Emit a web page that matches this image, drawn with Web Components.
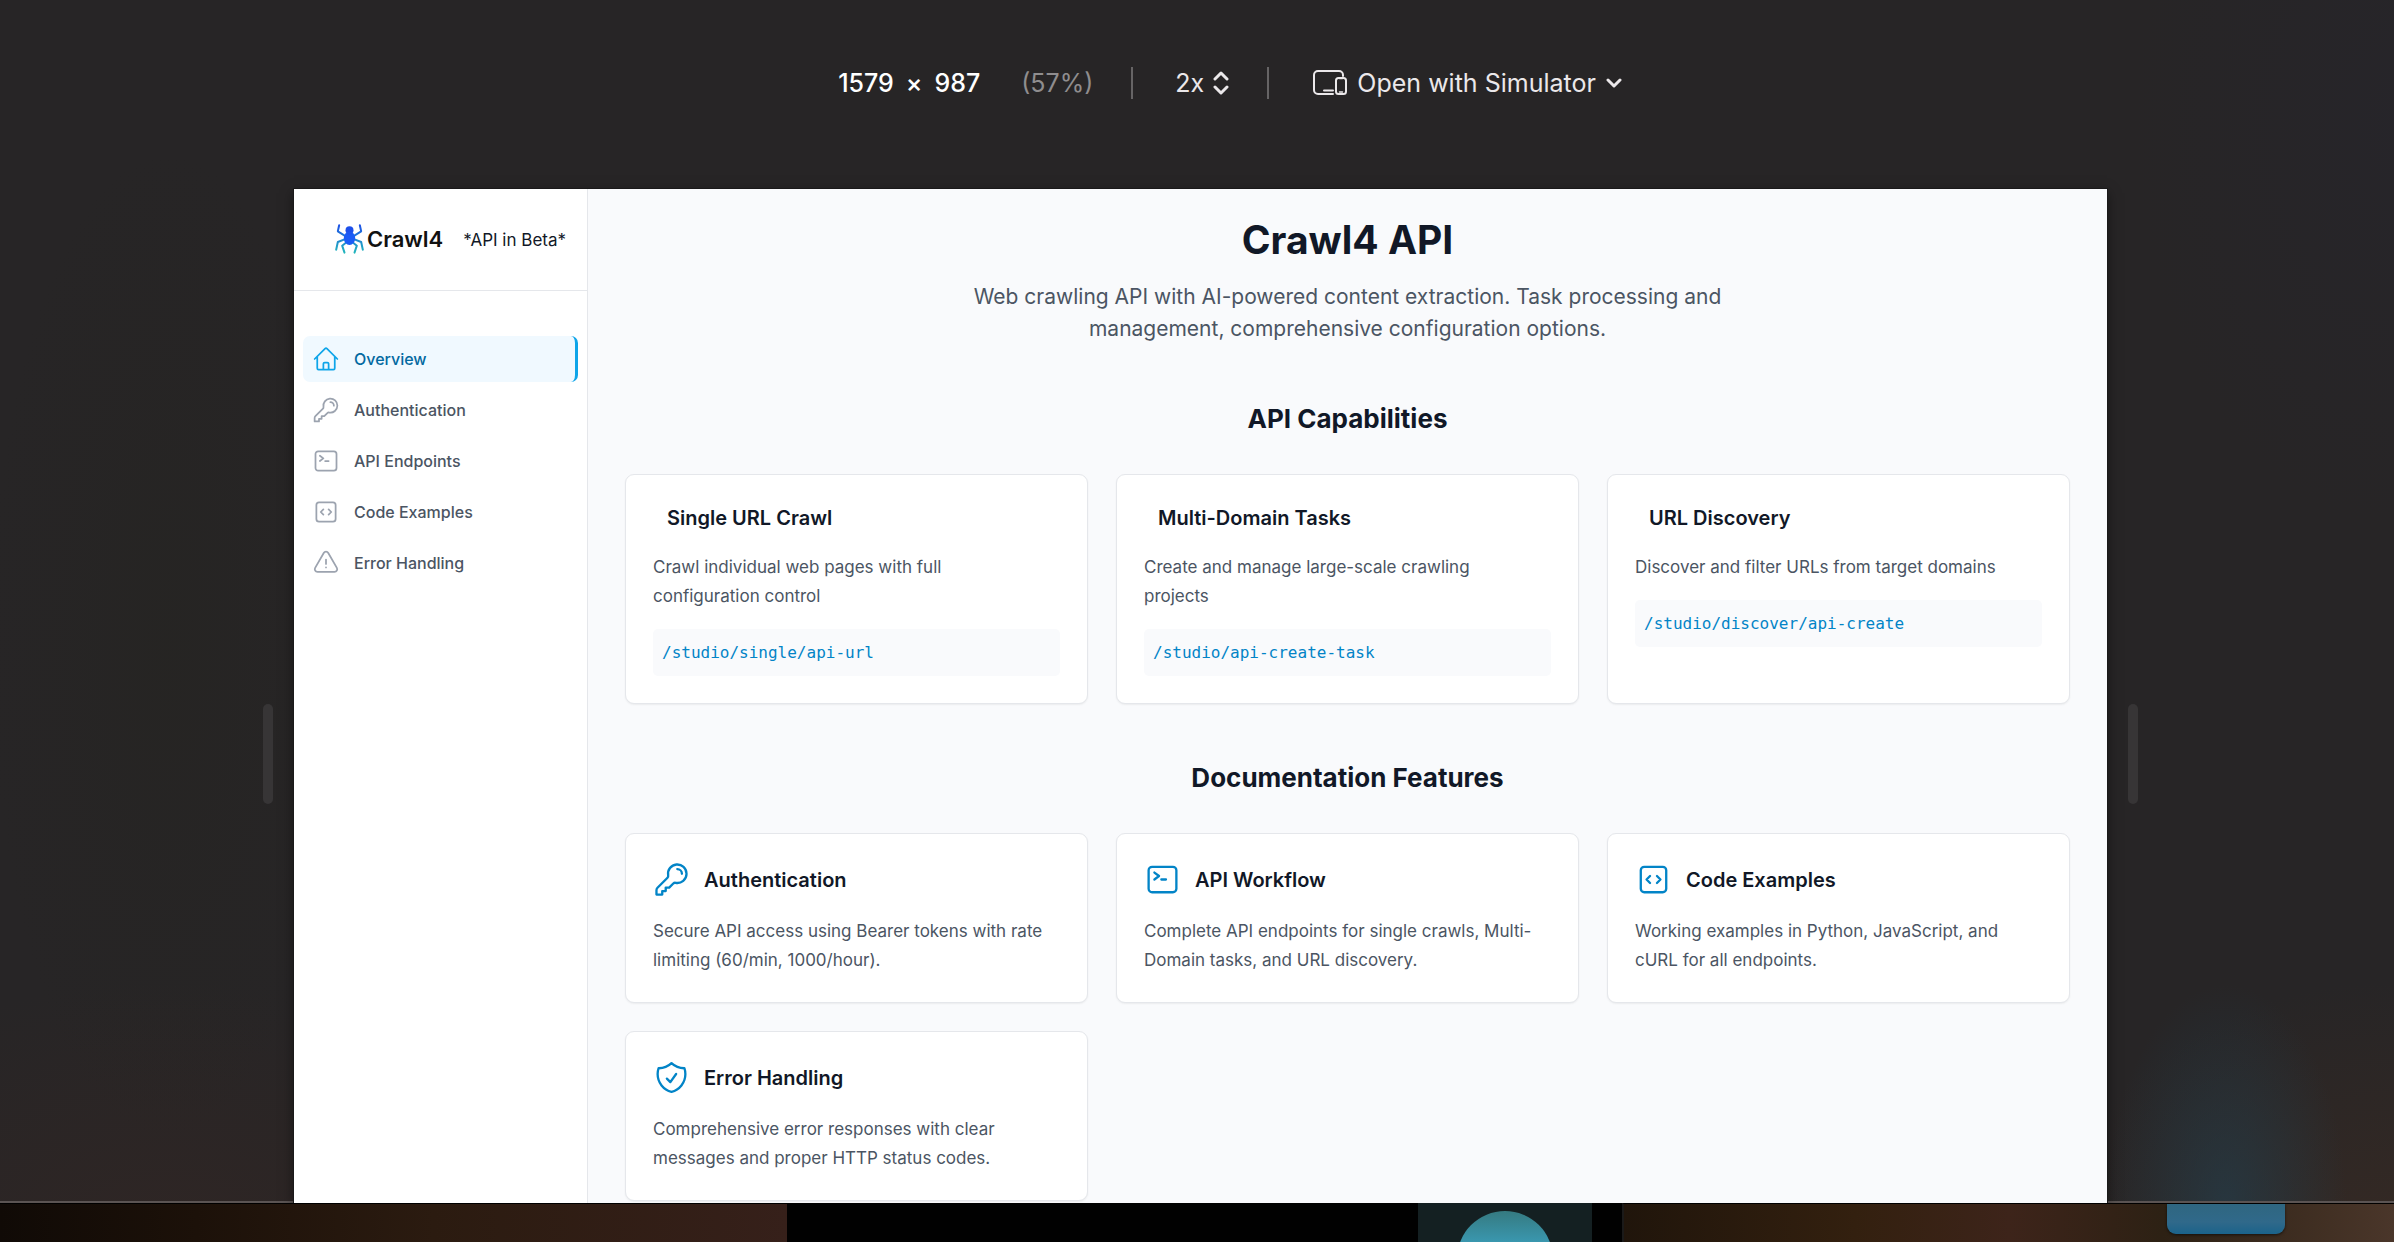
<!DOCTYPE html>
<html lang="en">
<head>
<meta charset="utf-8">
<meta name="viewport" content="width=device-width, initial-scale=1">
<title>Crawl4 API</title>
<style>
  html, body {
    margin: 0;
    background: #272526;
  }

  body {
    font-family: Inter, "Liberation Sans", sans-serif;
    color: #111827;
  }
</style>
</head>
<body>
<design-mode>
  <mode-toolbar slot="toolbar"></mode-toolbar>
  <docs-layout>
    <docs-sidebar slot="sidebar">
      <nav-item icon="home" active>Overview</nav-item>
      <nav-item icon="key">Authentication</nav-item>
      <nav-item icon="terminal">API Endpoints</nav-item>
      <nav-item icon="code">Code Examples</nav-item>
      <nav-item icon="warning">Error Handling</nav-item>
    </docs-sidebar>
    <docs-hero heading="Crawl4 API">Web crawling API with AI-powered content extraction. Task processing and management, comprehensive configuration options.</docs-hero>
    <docs-section heading="API Capabilities">
      <docs-card heading="Single URL Crawl" path="/studio/single/api-url">Crawl individual web pages with full configuration control</docs-card>
      <docs-card heading="Multi-Domain Tasks" path="/studio/api-create-task">Create and manage large-scale crawling projects</docs-card>
      <docs-card heading="URL Discovery" path="/studio/discover/api-create">Discover and filter URLs from target domains</docs-card>
    </docs-section>
    <docs-section heading="Documentation Features">
      <docs-card heading="Authentication" icon="key">Secure API access using Bearer tokens with rate limiting (60/min, 1000/hour).</docs-card>
      <docs-card heading="API Workflow" icon="terminal">Complete API endpoints for single crawls, Multi-Domain tasks, and URL discovery.</docs-card>
      <docs-card heading="Code Examples" icon="code">Working examples in Python, JavaScript, and cURL for all endpoints.</docs-card>
      <docs-card heading="Error Handling" icon="shield">Comprehensive error responses with clear messages and proper HTTP status codes.</docs-card>
    </docs-section>
  </docs-layout>
  <desktop-strip slot="desktop"></desktop-strip>
</design-mode>

<script>
const ICONS = {
  home: "M2.25 12l8.954-8.955c.44-.439 1.152-.439 1.591 0L21.75 12M4.5 9.75v10.125c0 .621.504 1.125 1.125 1.125H9.75v-4.875c0-.621.504-1.125 1.125-1.125h2.25c.621 0 1.125.504 1.125 1.125V21h4.125c.621 0 1.125-.504 1.125-1.125V9.75M8.25 21h8.25",
  key: "M15.75 5.25a3 3 0 013 3m3 0a6 6 0 01-7.029 5.912c-.563-.097-1.159.026-1.563.43L10.5 17.25H8.25v2.25H6v2.25H2.25v-2.818c0-.597.237-1.17.659-1.591l6.499-6.499c.404-.404.527-1 .43-1.563A6 6 0 1121.75 8.25z",
  terminal: "M6.75 7.5l3 2.25-3 2.25m4.5 0h3m-9 8.25h13.5A2.25 2.25 0 0021 18V6a2.25 2.25 0 00-2.25-2.25H5.25A2.25 2.25 0 003 6v12a2.25 2.25 0 002.25 2.25z",
  code: "M14.25 9.75L16.5 12l-2.25 2.25m-4.5 0L7.5 12l2.25-2.25M6 20.25h12A2.25 2.25 0 0020.25 18V6A2.25 2.25 0 0018 3.75H6A2.25 2.25 0 003.75 6v12A2.25 2.25 0 006 20.25z",
  warning: "M12 9v3.75m-9.303 3.376c-.866 1.5.217 3.374 1.948 3.374h14.71c1.73 0 2.813-1.874 1.948-3.374L13.949 3.378c-.866-1.5-3.032-1.5-3.898 0L2.697 16.126zM12 15.75h.007v.008H12v-.008z",
  shield: "M9 12.75L11.25 15 15 9.75m-3-7.036A11.959 11.959 0 013.598 6 11.99 11.99 0 003 9.749c0 5.592 3.824 10.29 9 11.623 5.176-1.332 9-6.03 9-11.622 0-1.31-.21-2.571-.598-3.751h-.152c-3.196 0-6.1-1.248-8.25-3.285z"
};

function icon(name) {
  return `<svg viewBox="0 0 24 24" fill="none" stroke="currentColor" stroke-width="1.5" stroke-linecap="round" stroke-linejoin="round" aria-hidden="true"><path d="${ICONS[name]}"/></svg>`;
}

class BaseElement extends HTMLElement {
  constructor() {
    super();
    this.attachShadow({ mode: "open" });
  }
  connectedCallback() {
    this.shadowRoot.innerHTML = this.template();
  }
}

/* Whole screen: toolbar, resizable page preview, strip of desktop below */
class DesignMode extends BaseElement {
  template() {
    return `
      <style>
        :host {
          display: grid;
          grid-template-rows: auto 1fr auto;
          min-height: 100vh;
          background:
            radial-gradient(ellipse 120px 220px at 93% 97%, rgba(35, 64, 80, 0.6), transparent),
            radial-gradient(ellipse 340px 260px at 100% 100%, rgba(62, 44, 34, 0.6), transparent),
            radial-gradient(ellipse 420px 260px at 7% 100%, rgba(52, 38, 35, 0.6), transparent),
            radial-gradient(ellipse 180px 500px at 7% 52%, rgba(37, 36, 33, 0.6), transparent),
            radial-gradient(ellipse 260px 400px at 100% 10%, rgba(38, 37, 44, 0.6), transparent),
            #272526;
        }

        .stage {
          display: flex;
          align-items: stretch;
          gap: 21px;
          padding: 0 256px 0 263px;
          border-bottom: 2px solid #5b5453;
        }

        .handle {
          align-self: center;
          flex: none;
          width: 10px;
          height: 100px;
          margin-top: 118px;
          border-radius: 5px;
          background: #373536;
        }

        .page {
          flex: 1;
          min-width: 0;
          display: grid;
          margin-bottom: -2px;
          background: #f9fafc;
          box-shadow: 0 0 0 1px #1a191a, 0 4px 12px rgba(0, 0, 0, 0.5);
        }
      </style>
      <slot name="toolbar"></slot>
      <div class="stage">
        <div class="handle"></div>
        <div class="page"><slot></slot></div>
        <div class="handle"></div>
      </div>
      <slot name="desktop"></slot>
    `;
  }
}

class ModeToolbar extends BaseElement {
  template() {
    return `
      <style>
        :host {
          display: flex;
          align-items: center;
          justify-content: center;
          height: 165px;
          padding: 0 0 24px 66px;
          font-size: 25px;
          line-height: 32px;
          color: #ebe8ea;
          white-space: nowrap;
        }

        .size {
          display: flex;
          gap: 12px;
          font-weight: 500;
          color: #fff;
        }

        .scale {
          margin-left: 41px;
          color: #8f8d8e;
        }

        hr {
          width: 2px;
          height: 32px;
          margin: 0 42px 0 38px;
          border: 0;
          background: #666465;
        }

        .ratio {
          display: flex;
          align-items: center;
          gap: 6px;
        }

        select, button {
          appearance: none;
          margin: 0;
          padding: 0;
          border: 0;
          background: none;
          font: inherit;
          color: inherit;
        }

        select {
          width: 32px;
        }

        button {
          display: flex;
          align-items: center;
          gap: 10px;
          padding-left: 2px;
        }

        svg {
          flex: none;
          fill: none;
          stroke: currentColor;
          stroke-linecap: round;
          stroke-linejoin: round;
        }
      </style>
      <div class="size"><span>1579</span><span>×</span><span>987</span></div>
      <span class="scale">(57%)</span>
      <hr>
      <label class="ratio">
        <select aria-label="Pixel ratio"><option>1x</option><option selected>2x</option><option>3x</option></select>
        <svg width="16" height="24" viewBox="0 0 16 24" stroke-width="3"><path d="M2 8l6-6 6 6M2 16l6 6 6-6"/></svg>
      </label>
      <hr>
      <button type="button">
        <svg width="34" height="26" viewBox="0 0 34 26" stroke-width="2"><path d="M20 24H5a4 4 0 01-4-4V5a4 4 0 014-4h21a4 4 0 014 4v1M11 20.500h9"/><rect x="23" y="8" width="10" height="16" rx="2.500"/><path d="M26.500 8.500h3M26.500 22h3" stroke-width="1.500"/></svg>
        <span>Open with Simulator</span>
        <svg width="16" height="12" viewBox="0 0 16 12" stroke-width="3"><path d="M2 3l6 6 6-6"/></svg>
      </button>
    `;
  }
}

class DocsLayout extends BaseElement {
  template() {
    return `
      <style>
        :host {
          display: grid;
          grid-template-columns: 294px minmax(0, 1fr);
        }

        main {
          display: flex;
          flex-direction: column;
          gap: 55px;
          padding: 28px 37px 2px;
        }
      </style>
      <slot name="sidebar"></slot>
      <main><slot></slot></main>
    `;
  }
}

class DocsSidebar extends BaseElement {
  template() {
    return `
      <style>
        :host {
          display: block;
          background: #fff;
          border-right: 1px solid #e5e7eb;
        }

        header {
          display: flex;
          align-items: center;
          gap: 20px;
          height: 101px;
          padding-left: 41px;
          border-bottom: 1px solid #e5e7eb;
          font-size: 17px;
          white-space: nowrap;
        }

        .logo {
          display: flex;
          align-items: center;
          gap: 3px;
          padding-bottom: 2px;
          font-size: 22px;
          font-weight: 600;
          color: #111;
          text-decoration: none;
        }

        .logo svg {
          width: 29px;
          height: 30px;
        }

        nav {
          display: flex;
          flex-direction: column;
          gap: 5px;
          padding: 45px 9px;
        }
      </style>
      <header>
        <a class="logo" href="#">
          <svg viewBox="0 0 86 90" aria-hidden="true">
            <defs>
              <linearGradient id="legs" gradientUnits="userSpaceOnUse" x1="0" y1="0" x2="0" y2="88">
                <stop offset="0" stop-color="#1d4ee8"/>
                <stop offset="1" stop-color="#22b8bb"/>
              </linearGradient>
            </defs>
            <g fill="none" stroke="url(#legs)" stroke-width="6" stroke-linecap="round" stroke-linejoin="round">
              <path d="M12 4L8 22L32 37M74 4L78 22L54 37"/>
              <path d="M34 44L8 54L3 77M52 44L78 54L83 77"/>
              <path d="M35 54L21 65L28 86M51 54L65 65L58 86"/>
            </g>
            <circle cx="43" cy="19" r="12" fill="#1d50ea"/>
            <ellipse cx="43" cy="43" rx="17" ry="20" fill="#1b5cf6"/>
            <path d="M36 24h14v8H36z" fill="#1c56f0"/>
          </svg>
          <span>Crawl4</span>
        </a>
        <span>*API in Beta*</span>
      </header>
      <nav><slot></slot></nav>
    `;
  }
}

class NavItem extends BaseElement {
  template() {
    return `
      <style>
        :host {
          display: block;
          color: #4b5563;
        }

        a {
          display: flex;
          align-items: center;
          gap: 14px;
          box-sizing: border-box;
          height: 46px;
          padding: 0 9px;
          border-radius: 7px;
          font-size: 16px;
          font-weight: 500;
          color: inherit;
          text-decoration: none;
        }

        svg {
          width: 28px;
          height: 28px;
          color: #9ca3af;
        }

        :host([active]) a {
          background: #f0f9ff;
          border-right: 3px solid #0ea5e9;
          color: #0369a1;
        }

        :host([active]) svg {
          color: #0ea5e9;
        }
      </style>
      <a href="#">${icon(this.getAttribute("icon"))}<span><slot></slot></span></a>
    `;
  }
}

class DocsHero extends BaseElement {
  template() {
    return `
      <style>
        :host {
          display: block;
          text-align: center;
        }

        h1 {
          margin: 0 0 18px;
          font-size: 39px;
          line-height: 46px;
          font-weight: 700;
        }

        p {
          max-width: 771px;
          margin: 0 auto;
          font-size: 21px;
          line-height: 32px;
          color: #4b5563;
        }
      </style>
      <h1>${this.getAttribute("heading")}</h1>
      <p><slot></slot></p>
    `;
  }
}

class DocsSection extends BaseElement {
  template() {
    return `
      <style>
        :host {
          display: block;
        }

        h2 {
          margin: 0 0 37px;
          font-size: 26px;
          line-height: 37px;
          font-weight: 700;
          text-align: center;
        }

        .grid {
          display: grid;
          grid-template-columns: repeat(3, minmax(0, 1fr));
          gap: 28px;
        }
      </style>
      <h2>${this.getAttribute("heading")}</h2>
      <div class="grid"><slot></slot></div>
    `;
  }
}

class DocsCard extends BaseElement {
  template() {
    const name = this.getAttribute("icon");
    const path = this.getAttribute("path");
    return `
      <style>
        :host {
          display: block;
          padding: 27px;
          background: #fff;
          border: 1px solid #e5e7eb;
          border-radius: 9px;
          box-shadow: 0 1px 2px rgba(0, 0, 0, 0.06);
        }

        .head {
          display: flex;
          align-items: center;
          gap: 14px;
          margin-bottom: 19px;
        }

        h3 {
          margin: 0;
          font-size: 20px;
          line-height: 32px;
          font-weight: 600;
        }

        .plain {
          padding-left: 14px;
        }

        svg {
          width: 37px;
          height: 37px;
          color: #0284c7;
        }

        p {
          margin: 0;
          padding-right: 12px;
          font-size: 17px;
          line-height: 29px;
          color: #4b5563;
        }

        code {
          display: block;
          margin-top: 18px;
          padding: 9px;
          border-radius: 5px;
          background: #f9fafc;
          font: 16px/29px "DejaVu Sans Mono", monospace;
          color: #0284c7;
        }
      </style>
      <div class="head ${name ? "" : "plain"}">${name ? icon(name) : ""}<h3>${this.getAttribute("heading")}</h3></div>
      <p><slot></slot></p>
      ${path ? `<code>${path}</code>` : ""}
    `;
  }
}

/* Windows of the desktop that show under the preview */
class DesktopStrip extends BaseElement {
  template() {
    return `
      <style>
        :host {
          display: grid;
          grid-template-columns: 787fr 835fr 772fr;
          height: 39px;
          overflow: hidden;
          background: #000;
          z-index: 1;
        }

        .left {
          border-top: 1px solid #000;
          background:
            radial-gradient(ellipse 30px 30px at 54% 70%, rgba(74, 54, 94, 0.7), transparent),
            linear-gradient(90deg, #100a06, #1c1109 25%, #2b1b10 55%, #36201a);
        }

        .middle {
          display: flex;
          justify-content: flex-end;
          padding-right: 30px;
          background: #010101;
        }

        .tile {
          display: flex;
          justify-content: center;
          width: 174px;
          background: #142022;
          overflow: hidden;
        }

        .disc {
          flex: none;
          width: 96px;
          height: 96px;
          margin-top: 8px;
          border-radius: 50%;
          background: linear-gradient(#357a80, #3a98b0 32px);
        }

        .right {
          display: flex;
          justify-content: flex-end;
          padding-right: 109px;
          border-top: 1px solid #000;
          border-left: 2px solid #1b1a19;
          background: linear-gradient(90deg, #20150b, #33200f 30%, #3d241a 50%, #2d2114 70%, #4a362a);
        }

        .dock {
          width: 118px;
          height: 30px;
          border-radius: 0 0 9px 9px;
          background: linear-gradient(#2f6680, #30698a 60%, #1b638a);
          box-shadow: 0 1px 3px rgba(0, 0, 0, 0.6);
        }
      </style>
      <div class="left"></div>
      <div class="middle"><div class="tile"><div class="disc"></div></div></div>
      <div class="right"><div class="dock"></div></div>
    `;
  }
}

customElements.define("design-mode", DesignMode);
customElements.define("mode-toolbar", ModeToolbar);
customElements.define("docs-layout", DocsLayout);
customElements.define("docs-sidebar", DocsSidebar);
customElements.define("nav-item", NavItem);
customElements.define("docs-hero", DocsHero);
customElements.define("docs-section", DocsSection);
customElements.define("docs-card", DocsCard);
customElements.define("desktop-strip", DesktopStrip);
</script>
</body>
</html>
